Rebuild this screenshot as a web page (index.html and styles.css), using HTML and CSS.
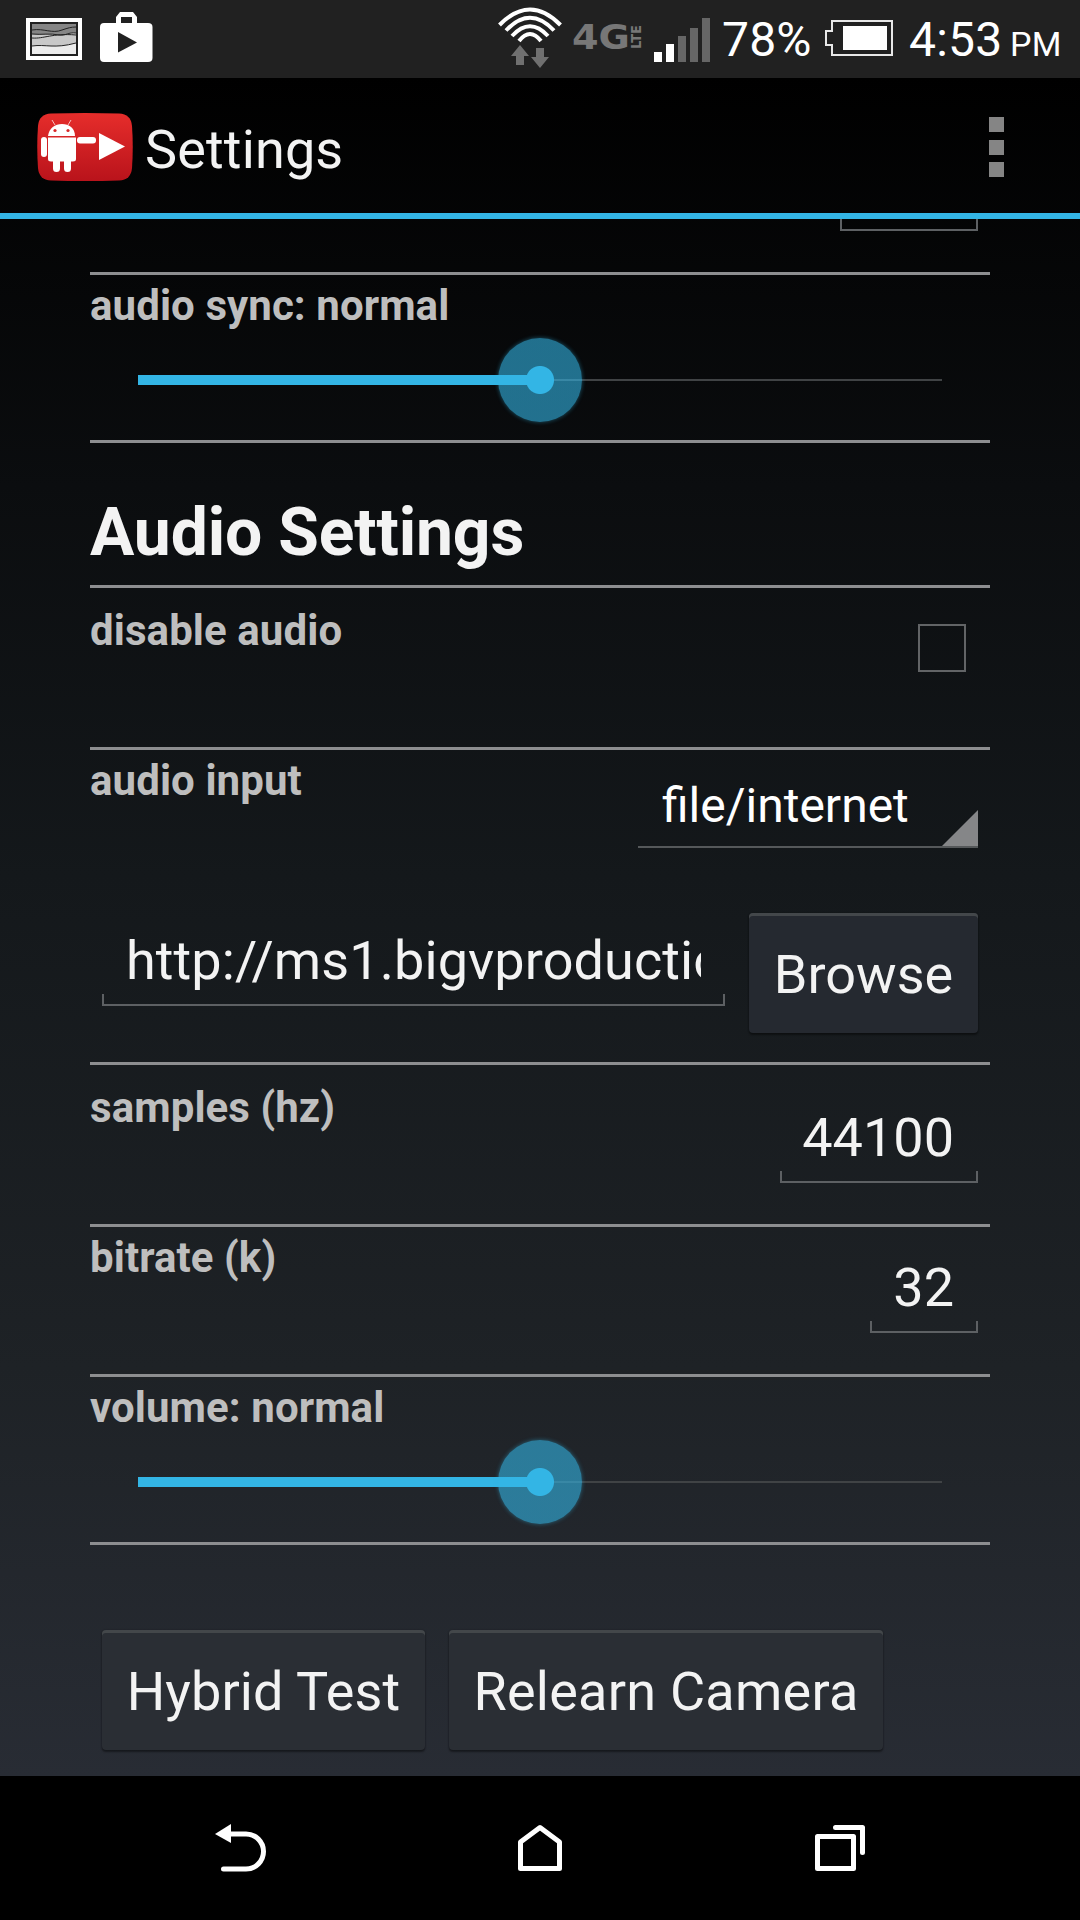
FILE: index.html
```html
<!DOCTYPE html>
<html lang="en">
  <head>
    <meta charset="UTF-8">
    <title>Settings</title>
    <link rel="stylesheet" href="styles.css">
  </head>
  <body>
    <div class="status-bar">
      <svg class="icon-picture" width="56" height="42" viewBox="0 0 56 42">
        <rect width="56" height="42" fill="#fff"/>
        <rect x="4" y="4" width="48" height="34" fill="#212121"/>
        <rect x="6" y="6" width="44" height="30" fill="#c8c8c8"/>
        <path d="M6 6H50V15C42 14 40 18 33 17C24 15 16 18 6 16Z" fill="#858585"/>
        <path d="M6 28C20 26 28 31 50 25V36H6Z" fill="#ececec"/>
        <path d="M6 12C18 10 26 16 36 12C42 10 45 9 50 9M6 16C16 17 24 15 33 17C40 18 42 14 50 15M6 20C18 21 26 15 50 17M6 28C20 26 28 31 50 25" fill="none" stroke="#222" stroke-width="1"/>
      </svg>
      <svg class="icon-store" width="53" height="50" viewBox="0 0 53 50">
        <path d="M16 11V5L20 0H33L37 5V11H48Q52.500 11 52.500 15V46Q52.500 50 48 50H4Q0 50 0 46V15Q0 11 4 11ZM21 11H32V5H21Z" fill="#fff" fill-rule="evenodd"/>
        <path d="M18 20L37 30.500L18 40.500Z" fill="#212121"/>
      </svg>
      <svg class="icon-wifi" width="64" height="62" viewBox="0 0 64 62">
        <g fill="none" stroke="#fff" stroke-width="4">
          <path d="M1.500 18Q32 -13 62.500 18"/>
          <path d="M8 23.500Q32 -2 56 23.500"/>
          <path d="M14 29Q32 9.500 50 29"/>
          <path d="M21 34Q32 20 43 34"/>
        </g>
        <path d="M22 38L31 49H26V58H18V49H13Z" fill="#707070"/>
        <path d="M38 41H46V50H51L42 61L33 50H38Z" fill="#707070"/>
      </svg>
      <svg class="icon-4g" width="70" height="26" viewBox="0 0 70 26">
        <text class="net" x="0" y="25" textLength="58" lengthAdjust="spacingAndGlyphs">4G</text>
        <text class="lte" transform="translate(69 25) rotate(-90)" textLength="24" lengthAdjust="spacingAndGlyphs">LTE</text>
      </svg>
      <svg class="icon-signal" width="56" height="44" viewBox="0 0 56 44">
        <path d="M0 34H8V44H0ZM12 26H20V44H12Z" fill="#fff"/>
        <path d="M24 18H32V44H24ZM36 10H44V44H36ZM48 0H56V44H48Z" fill="#666"/>
      </svg>
      <span class="percent">78%</span>
      <svg class="icon-battery" width="68" height="36" viewBox="0 0 68 36">
        <path d="M7 1H67V35H7V25H1V11H7Z" fill="none" stroke="#e8e8e8" stroke-width="2"/>
        <rect x="18" y="6" width="44" height="24" fill="#fff"/>
      </svg>
      <span class="clock">4:53</span>
      <span class="ampm">PM</span>
    </div>

    <div class="action-bar">
      <svg class="app-logo" width="96" height="68" viewBox="0 0 96 68">
        <defs>
          <linearGradient id="red" x1="0" y1="0" x2="0" y2="1">
            <stop offset="0" stop-color="#e62d2b"/>
            <stop offset="1" stop-color="#b9131b"/>
          </linearGradient>
        </defs>
        <path d="M14 .5Q48 -.5 82 .5Q94 1 95 13Q96.500 34 95 55Q94 67 82 67.500Q48 68.500 14 67.500Q2 67 1 55Q-.5 34 1 13Q2 1 14 .5Z" fill="url(#red)"/>
        <g fill="#fff">
          <path d="M11 23C12 15 18 11 25 11C32 11 38 15 38 23Z"/>
          <path d="M11 24.500H39V46Q39 48.500 36 48.500H34V55.500A3.500 3.500 0 0 1 27 55.500V48.500H23V55.500A3.500 3.500 0 0 1 16 55.500V48.500H14Q11 48.500 11 46Z"/>
          <rect x="4" y="24" width="6" height="20" rx="3"/>
          <rect x="40" y="24" width="19" height="6.500" rx="3"/>
          <path d="M62 20L88 33.500L62 47Z"/>
        </g>
        <path d="M18 12L15 7M31 12L34 7" stroke="#fff" stroke-opacity=".7" stroke-width="1"/>
        <circle cx="18" cy="17.500" r="1.600" fill="#d92828"/>
        <circle cx="31" cy="17.500" r="1.600" fill="#d92828"/>
      </svg>
      <h1 class="title">Settings</h1>
      <div class="overflow"><i></i><i></i><i></i></div>
    </div>

    <div class="content">
      <div class="row row-cut">
        <div class="edit edit-cut"></div>
      </div>

      <div class="row row-slider">
        <div class="label">audio sync: normal</div>
        <div class="slider"><div class="fill"></div><div class="thumb"></div></div>
      </div>

      <div class="row row-heading">
        <h2>Audio Settings</h2>
      </div>

      <div class="row row-check">
        <div class="label">disable audio</div>
        <div class="checkbox"></div>
      </div>

      <div class="row row-input">
        <div class="line">
          <div class="label">audio input</div>
          <div class="spinner">
            file/internet
            <svg width="36" height="36" viewBox="0 0 36 36"><path d="M36 0V36H0Z" fill="#858688"/></svg>
          </div>
        </div>
        <div class="line line-url">
          <div class="edit edit-url"><span class="url">http://ms1.bigvproductio</span></div>
          <div class="button browse">Browse</div>
        </div>
      </div>

      <div class="row row-samples">
        <div class="label">samples (hz)</div>
        <div class="edit edit-samples">44100</div>
      </div>

      <div class="row row-bitrate">
        <div class="label">bitrate (k)</div>
        <div class="edit edit-bitrate">32</div>
      </div>

      <div class="row row-slider">
        <div class="label">volume: normal</div>
        <div class="slider"><div class="fill"></div><div class="thumb"></div></div>
      </div>

      <div class="buttons">
        <div class="button hybrid">Hybrid Test</div>
        <div class="button relearn">Relearn Camera</div>
      </div>
    </div>

    <div class="nav-bar">
      <svg width="52" height="48" viewBox="0 0 52 48">
        <path d="M14 10H31A17.500 17.500 0 0 1 31 45H8.500" fill="none" stroke="#fff" stroke-width="5" stroke-linecap="round"/>
        <path d="M0 10L16 0V19Z" fill="#fff"/>
      </svg>
      <svg class="home" width="44" height="48" viewBox="0 0 44 48">
        <path d="M2.500 18L22 3.500L41.500 18V44.500H2.500Z" fill="none" stroke="#fff" stroke-width="5" stroke-linejoin="round"/>
      </svg>
      <svg class="recent" width="50" height="46" viewBox="0 0 50 46">
        <path d="M2.500 11.500H38.500V43.500H2.500ZM20.500 2.500H47.500V27.500" fill="none" stroke="#fff" stroke-width="5" stroke-linejoin="round" stroke-linecap="round"/>
      </svg>
    </div>
  </body>
</html>
```

FILE: styles.css
```css
* {
  box-sizing: border-box;
}
body {
  margin: 0;
  width: 1080px;
  height: 1920px;
  overflow: hidden;
  display: flex;
  flex-direction: column;
  font-family: Roboto, "Liberation Sans", sans-serif;
  color: #f3f3f3;
  background: #000 linear-gradient(#000, #0b0d0f 24%, #14181b 47%, #1e2226 76%, #282c34) 0 78px / 100% 1698px no-repeat;
}
svg {
  display: block;
  flex: none;
}

/* status bar */
.status-bar {
  height: 78px;
  display: flex;
  align-items: flex-start;
  background: #212121;
  color: #fff;
  font-size: 48px;
  line-height: 56px;
  letter-spacing: 0.2px;
  white-space: nowrap;
}
.icon-picture {
  margin: 18px 0 0 26px;
}
.icon-store {
  margin: 12px 0 0 18px;
}
.icon-wifi {
  margin: 7px 0 0 345px;
}
.icon-4g {
  margin: 24px 0 0 10px;
  overflow: visible;
  fill: #777;
  font-family: "DejaVu Sans", sans-serif;
  font-weight: bold;
  letter-spacing: 0;
}
.net {
  font-size: 33px;
}
.lte {
  font-size: 14px;
}
.icon-signal {
  margin: 18px 0 0 12px;
}
.percent {
  width: 91px;
  margin: 12px 0 0 12px;
}
.icon-battery {
  margin: 20px 0 0 12px;
}
.clock {
  width: 94px;
  margin: 12px 0 0 16px;
}
.ampm {
  margin: 24px 0 0 7px;
  font-size: 34px;
  line-height: 40px;
}

/* action bar */
.action-bar {
  height: 141px;
  display: flex;
  align-items: flex-start;
  border-bottom: 6px solid #33b5e5;
}
.app-logo {
  margin: 35px 0 0 37px;
}
.title {
  margin: 40px 0 0 12px;
  font-size: 54px;
  line-height: 63px;
  font-weight: 400;
  letter-spacing: 0.15px;
}
.overflow {
  display: flex;
  flex-direction: column;
  gap: 7.5px;
  margin: 39px 76px 0 auto;
}
.overflow i {
  width: 15px;
  height: 15px;
  background: #858585;
}

/* settings list */
.content {
  height: 1557px;
  padding: 0 90px;
}
.row {
  display: flex;
  justify-content: space-between;
  align-items: flex-start;
  border-bottom: 3px solid #8d8e90;
}
.label {
  margin-top: 6px;
  font-size: 42px;
  line-height: 49px;
  font-weight: 700;
  letter-spacing: 0.08px;
  color: #bebebe;
  white-space: nowrap;
}
.row-cut {
  height: 56px;
}
.row-slider {
  height: 168px;
  flex-direction: column;
  justify-content: flex-start;
}
.row-heading {
  height: 145px;
  align-items: flex-end;
}
.row-heading h2 {
  margin: 0 0 14px;
  font-size: 66px;
  line-height: 77px;
  font-weight: 700;
  letter-spacing: -0.15px;
}
.row-check {
  height: 162px;
}
.row-check .label,
.row-samples .label {
  margin-top: 18px;
}
.row-input {
  height: 315px;
  flex-direction: column;
  justify-content: flex-start;
}
.row-samples {
  height: 162px;
}
.row-bitrate {
  height: 150px;
}

/* text fields: a line with two short ticks at its ends */
.edit {
  padding: 0 24px 0 0;
  margin-right: 12px;
  font-size: 54px;
  line-height: 63px;
  text-align: right;
  background:
    linear-gradient(#5d6063, #5d6063) left bottom / 2px 12px no-repeat,
    linear-gradient(#5d6063, #5d6063) right bottom / 2px 12px no-repeat,
    linear-gradient(#5d6063, #5d6063) left bottom / 100% 2px no-repeat;
}
.edit-cut {
  width: 138px;
  height: 12px;
  margin-left: auto;
}
.edit-url {
  width: 623px;
  height: 90px;
  margin: 0;
  padding: 13px 24px 0 24px;
  text-align: left;
  letter-spacing: 0.1px;
}
.url {
  display: block;
  overflow: hidden;
  white-space: nowrap;
}
.edit-samples {
  width: 198px;
  height: 90px;
  margin-top: 28px;
  padding-top: 13px;
}
.edit-bitrate {
  width: 108px;
  height: 90px;
  margin-top: 16px;
  padding-top: 13px;
}
.checkbox {
  width: 48px;
  height: 48px;
  margin: 36px 24px 0 0;
  border: 2px solid #626466;
}
.line {
  width: 900px;
  display: flex;
  justify-content: space-between;
  align-items: flex-start;
}
.line-url {
  margin-top: 65px;
  padding: 0 12px;
}
.line-url .edit {
  margin-top: 3px;
}
.spinner {
  position: relative;
  width: 340px;
  height: 92px;
  margin: 6px 12px 0 0;
  padding: 22px 0 0 24px;
  font-size: 48px;
  line-height: 56px;
  color: #fff;
  border-bottom: 2px solid #55585a;
}
.spinner svg {
  position: absolute;
  right: 0;
  bottom: 0;
}

/* slider */
.slider {
  position: relative;
  width: 804px;
  height: 84px;
  margin: 8px 0 0 48px;
  background: linear-gradient(#404345, #404345) center 41px / 100% 2px no-repeat;
}
.fill {
  position: absolute;
  left: 0;
  top: 37px;
  width: 50%;
  height: 10px;
  background: #33b5e5;
}
.thumb {
  position: absolute;
  left: 360px;
  top: 0;
  width: 84px;
  height: 84px;
  border-radius: 50%;
  background: radial-gradient(circle, #33b5e5 13.5px, rgba(51, 181, 229, 0.6) 14.5px);
  box-shadow: 0 0 4px rgba(51, 181, 229, 0.45);
}

/* buttons */
.button {
  height: 120px;
  padding-top: 30px;
  font-size: 54px;
  line-height: 63px;
  text-align: center;
  white-space: nowrap;
  background: #252930;
  border-radius: 4px;
  box-shadow: inset 0 3px #43474a, 0 2px 2px rgba(0, 0, 0, 0.4), 0 0 2px rgba(0, 0, 0, 0.3);
}
.buttons {
  display: flex;
  gap: 24px;
  margin: 85px 0 0 12px;
}
.buttons .button {
  background: #2a2e34;
}
.browse {
  width: 229px;
}
.hybrid {
  width: 323px;
  letter-spacing: 0.1px;
}
.relearn {
  width: 434px;
  letter-spacing: 0.25px;
}

/* navigation keys */
.nav-bar {
  height: 144px;
  display: flex;
  align-items: flex-start;
  padding: 48px 0 0 215px;
  background: #000;
}
.home {
  margin-left: 251px;
}
.recent {
  margin: 1px 0 0 253px;
}
```
